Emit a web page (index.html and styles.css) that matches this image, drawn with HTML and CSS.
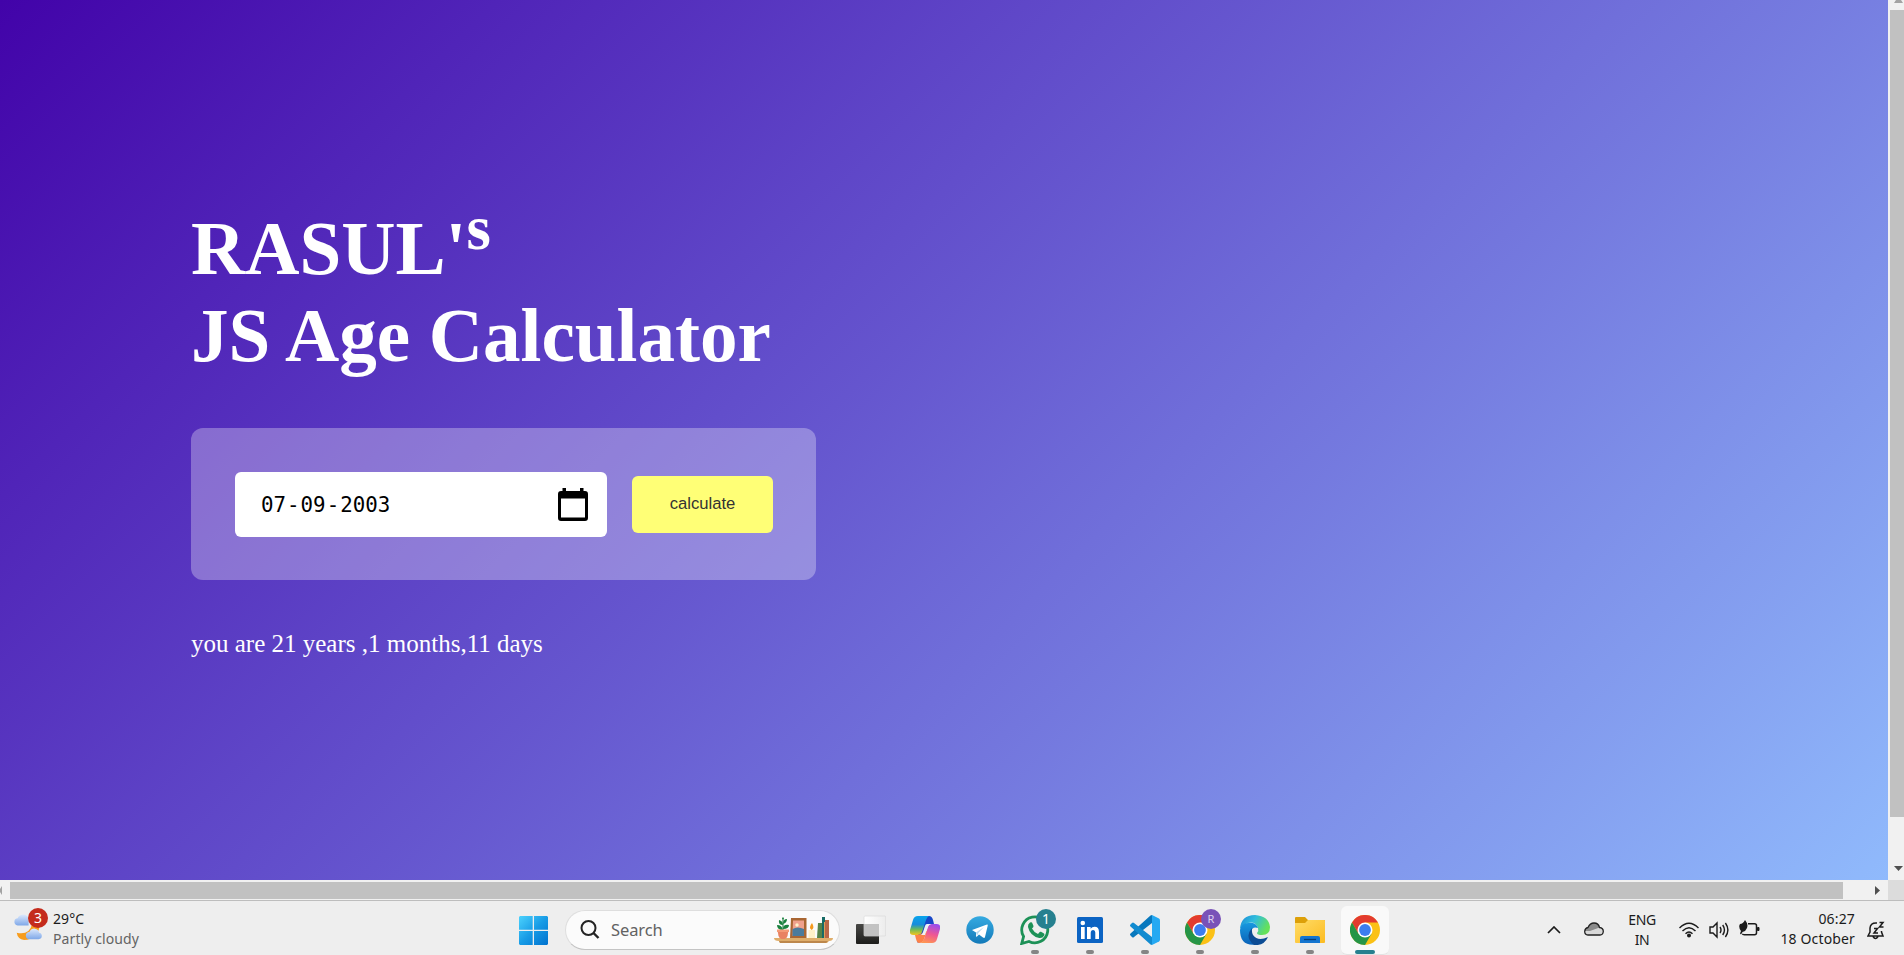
FILE: index.html
```html
<!DOCTYPE html>
<html lang="en">
<head>
<meta charset="utf-8">
<title>Age Calculator</title>
<link rel="stylesheet" href="styles.css">
</head>
<body>
<div class="screen">
  <div class="browser">
    <main class="page">
      <h1>RASUL'<sup>s</sup><br>JS Age Calculator</h1>
      <div class="card">
        <div class="date"><span class="date-text">07<i>-</i>09<i>-</i>2003</span>
          <svg class="cal" viewBox="0 0 30 33"><path fill="#000" fill-rule="evenodd" d="M4.500 0H8v3h14V0h3.500v3H27q3 0 3 3v24q0 3-3 3H3q-3 0-3-3V6q0-3 3-3h1.500zM3 10.500v19h24v-19z"/></svg>
        </div>
        <button class="calc">calculate</button>
      </div>
      <p class="result">you are 21 years ,1 months,11 days</p>
    </main>
    <div class="vbar"><svg class="up" viewBox="0 0 9 3"><path d="M2 0h5l2 3H0z" fill="#a3a3a3"/></svg><div class="vthumb"></div><svg class="down" viewBox="0 0 9 5"><path d="M0 0h9L4.500 5z" fill="#505050"/></svg></div>
    <div class="hbar"><svg class="left" viewBox="0 0 3 9"><path d="M2 0v9L0 6V3z" fill="#a3a3a3"/></svg><div class="hthumb"></div><svg class="right" viewBox="0 0 5 9"><path d="M0 0v9l5-4.500z" fill="#505050"/></svg></div>
    <div class="corner"></div>
  </div>

  <footer class="taskbar">
    <svg width="0" height="0" class="defs">
      <defs>
        <linearGradient id="cloud" x2="0" y2="1"><stop stop-color="#dce9fd"/><stop offset="1" stop-color="#7fa8e8"/></linearGradient>
        <linearGradient id="win" gradientUnits="userSpaceOnUse" x1="0" y1="0" x2="29" y2="29"><stop stop-color="#4cd2fd"/><stop offset=".5" stop-color="#189ce6"/><stop offset="1" stop-color="#0071ce"/></linearGradient>
        <g id="chrome">
          <circle cx="15" cy="15" r="15" fill="#fbc116"/>
          <path d="M15 7.500H28A15 15 0 0 0 2 7.500L8.500 18.700z" fill="#e33b2e"/>
          <path d="M2 7.500A15 15 0 0 0 15 30l6.500-11.300L15 15 8.500 18.700z" fill="#269547"/>
          <circle cx="15" cy="15" r="7.500" fill="#fff"/><circle cx="15" cy="15" r="5.900" fill="#3c7df0"/>
        </g>
      </defs>
    </svg>

    <div class="weather">
      <div class="weather-icon">
        <svg width="34" height="35" viewBox="0 0 34 35">
          <path d="M28 16c1 9-7 18-17 18Q4 33 3 26q14 3 17-10z" fill="#f79c1c"/>
          <path d="M4 18q-4-1-3.500-5Q1 10 4 10q2-4 6-4 4 0 6 4v8z" fill="url(#cloud)"/>
          <path d="M16 33q-3-.5-3-4t4-4q2-4 6-3.500 4 .5 4.500 4.500 3 .5 3 3.500T27 33z" fill="url(#cloud)"/>
        </svg>
        <span class="badge red">3</span>
      </div>
      <div class="weather-text"><span>29°C</span><span class="muted">Partly cloudy</span></div>
    </div>

    <div class="center">
      <svg class="start" viewBox="0 0 29 29"><path fill="url(#win)" d="M1 0h12.700v13.700H0V1zM15 0h13l1 1v12.700H15zM0 15h13.700v14H1l-1-1zM15 15h14v13l-1 1H15z"/></svg>

      <div class="search">
        <svg width="20" height="20" viewBox="0 0 20 20" fill="none" stroke="#242424" stroke-width="2"><circle cx="8.500" cy="8" r="7"/><path d="M13.500 13l5 5" stroke-width="2.400"/></svg>
        <span>Search</span>
        <svg class="shelf" width="59" height="27" viewBox="0 0 59 27">
          <path d="M0 21h59q0 3-4 3l-2 2H6l-1-2q-5 0-5-3z" fill="#dfae6b"/><path d="M5 24h49l-2 2H6z" fill="#bd884c"/>
          <path d="M9 14V3" stroke="#14753b"/>
          <path d="M9 13Q3 13 3 8q5 0 6 5zM9 12q0-5 6-4 0 4-6 4zM9 8Q4 8 5 3q4 1 4 5zM9 7q0-5 4-5 0 4-4 5zM9 3Q7 2 9 0q2 2 0 3z" fill="#19803d"/>
          <path d="M3.500 13h11l-1 6q-1 3-3 3h-3q-2 0-3-3z" fill="#e98262"/><path d="M3 12.500h12V15H3z" fill="#f49a76"/>
          <path d="M17 1h15.500v20H16z" fill="#a96632"/><path d="M19 3.500h11V19H18.500z" fill="#efa18d"/><path d="M18.500 12q5-3 11.500 0v7H18.500z" fill="#4b7b9b"/><circle cx="23" cy="8" r="1.700" fill="#fff1ca"/>
          <path d="M34.500 13h6.500v8h-6.500z" fill="#fff0c8"/><path d="M37.700 13Q34 11 38 6q3 5-.3 7z" fill="#f69a1e"/>
          <path d="M44 6h4v15h-5z" fill="#57834a"/><path d="M48 0h3v21h-3z" fill="#176b66"/><path d="M51 3h4v18h-4z" fill="#ba6848"/><path d="M50 5h1v16h-1z" fill="#d8a15a"/>
        </svg>
      </div>

      <div class="apps">
        <div class="app tasks"><svg viewBox="0 0 30 30">
          <linearGradient id="tv" x2="0" y2="1"><stop stop-color="#474745"/><stop offset="1" stop-color="#1d1d1b"/></linearGradient>
          <linearGradient id="tw" x2="1" y2="0"><stop stop-color="#fff"/><stop offset="1" stop-color="#ececec"/></linearGradient>
          <rect y="9" width="23" height="20" rx="1" fill="url(#tv)"/><rect x="8" y="1" width="21.700" height="20" rx="1" fill="url(#tw)" stroke="#dadada" stroke-width=".7"/><path d="M8 9h15v12H8z" fill="#c2c2c2"/></svg></div>
        <div class="app"><svg viewBox="0 0 30 30">
          <linearGradient id="cp1" x2="0" y2="1"><stop stop-color="#08a4ec"/><stop offset=".45" stop-color="#188cdb"/><stop offset=".7" stop-color="#6bb95b"/><stop offset="1" stop-color="#f3c51c"/></linearGradient>
          <linearGradient id="cp2" x1=".6" x2=".3" y2="1"><stop stop-color="#9c4eea"/><stop offset=".5" stop-color="#ef5694"/><stop offset="1" stop-color="#ff9651"/></linearGradient>
          <path d="M11 1h8q3 0 4 4l1 4h-5q-3 0-4 4l-3 10q-2 6-5 4l2-20z" fill="#1747c8"/>
          <path d="M8 1h11q-2 1-3 4l-4 12q-1 3-5 3H3q-4 0-3-5L3 5q1-4 5-4z" fill="url(#cp1)"/>
          <path d="M22 9h5q4 0 3 5l-3 10q-1 4-5 4H10q3-1 4-4l4-12q1-3 4-3z" fill="url(#cp2)"/>
          <path d="M5 20q4 0 6-1l3-2 3-1-3 8q-1 4-5 4-2 0-3-4z" fill="#fc8149"/>
          <path d="M17 9h4q-2.500.5-3.300 3L15 20h-4q1.500-1 2-3l2-6q.5-1.800 2-2z" fill="#eef0f5"/></svg></div>
        <div class="app"><svg viewBox="0 0 30 30"><linearGradient id="tg" x2="0" y2="1"><stop stop-color="#35aae1"/><stop offset="1" stop-color="#147ab9"/></linearGradient><circle cx="15" cy="15" r="13.700" fill="url(#tg)"/><path d="M7 15l15-5.500q1-.2.700 1.200L20 22q-.5 1.500-2 .5l-4-3-2 2q-1 .7-1-.5v-3.500z" fill="#fff"/><path d="M11 17.500l8-5.500-5.500 5.800-1.500 3z" fill="#b4d8ee"/></svg></div>
        <div class="app"><svg viewBox="0 0 30 30"><path d="M1.700 28.500l1.900-7A13 13 0 1 1 9 26.500z" fill="none" stroke="#1d9157" stroke-width="2.800"/><path d="M10 7.500q1-.7 2 0l1.500 3.500q.2 1-1.500 2.500 2 4 6 5.500l1.700-2q.5-.6 1.300-.2l3 1.600q.8.600.2 2-1.500 3-5 2.600Q10 21 8 12q-.4-3 2-4.500z" fill="#1d9157"/></svg><span class="badge teal">1</span><i class="dot"></i></div>
        <div class="app"><svg viewBox="0 0 30 30"><rect x="2" y="2" width="26" height="26" rx="1.500" fill="#0b63c3"/><circle cx="7.800" cy="8" r="2.300" fill="#fff"/><path d="M6 12h3.700v12H6zM12 12h3.600v1.700q1.300-2 4-2 4.400 0 4.400 5.300v7h-3.700v-6.500q0-2.600-2.100-2.600-2.500 0-2.500 3V24H12z" fill="#fff"/></svg><i class="dot"></i></div>
        <div class="app"><svg viewBox="0 0 30 30"><path d="M22 0l7 3.500q1 .5 1 2v19q0 1.500-1 2L22 30z" fill="#25a9f2"/><path d="M22 0v8L4 22q-1 1-2 0l-1.500-1.400q-1-1 0-2L20.500.6z" fill="#0878bd"/><path d="M22 30v-8L4 8Q3 7 2 8L.5 9.400q-1 1 0 2l20 18z" fill="#118bd0"/></svg><i class="dot"></i></div>
        <div class="app"><svg viewBox="0 0 30 30"><use href="#chrome"/></svg><span class="badge purple">R</span><i class="dot"></i></div>
        <div class="app"><svg viewBox="0 0 30 30">
          <linearGradient id="ed1" x2="1" y2=".4"><stop stop-color="#1989d8"/><stop offset=".5" stop-color="#31bddc"/><stop offset="1" stop-color="#65e15a"/></linearGradient>
          <linearGradient id="ed2" x2="0" y2="1"><stop stop-color="#1799df"/><stop offset="1" stop-color="#0a62b8"/></linearGradient>
          <path d="M0 14Q1 0 15 0q14 1 15 12 0 8-8 8-5 0-5-2 2-2 1-5Q15 6 8 8 2 10 0 14z" fill="url(#ed1)"/>
          <path d="M0 15Q1 8 8 8q8-1 10 5-6-2-7 4 0 7 8 12Q0 33 0 15z" fill="url(#ed2)"/>
          <path d="M12 13q-8 9 2 17 10 1 14-8-10 5-15-2-1.500-3-1-7z" fill="#0c4c94"/></svg><i class="dot"></i></div>
        <div class="app"><svg viewBox="0 0 30 30"><linearGradient id="fo" x2="1" y2="1"><stop stop-color="#ffdc67"/><stop offset="1" stop-color="#fcbb20"/></linearGradient><path d="M0 3q0-1 1-1h9l3 3h16q1 0 1 1v6H0z" fill="#dda009"/><path d="M0 8h10l3-3h16q1 0 1 1v21q0 1-1 1H1q-1 0-1-1z" fill="url(#fo)"/><path d="M5 28v-5q0-2 2-2h16q2 0 2 2v5z" fill="#1475d0"/><path d="M9 24.500h12" stroke="#063f78" stroke-width="1.300"/></svg><i class="dot"></i></div>
        <div class="app active"><svg viewBox="0 0 30 30"><use href="#chrome"/></svg><i class="dot"></i></div>
      </div>
    </div>

    <div class="tray">
      <svg class="chev" width="14" height="8" viewBox="0 0 14 8" fill="none" stroke="#1b1b1b" stroke-width="1.700"><path d="M1 7l6-6 6 6"/></svg>
      <svg class="onedrive" width="20" height="14" viewBox="0 0 20 14"><path d="M4 13q-3.300-.3-3.300-3.600Q1 6 4 5.500 6 1 10 1q4.500 0 5.500 4.500 3.800.5 3.800 4Q19 13 16 13z" fill="#d8d8d8"/><path d="M1 9q0-3 3-3.500Q6 1 10 1q4.500 0 5.500 4.500L6 9z" fill="#8b8b8b"/><path d="M4 13q-3.300-.3-3.300-3.600Q1 6 4 5.500 6 1 10 1q4.500 0 5.500 4.500 3.800.5 3.800 4Q19 13 16 13z" fill="none" stroke="#222" stroke-width="1.300"/></svg>
      <div class="lang"><span>ENG</span><span>IN</span></div>
      <svg class="wifi" width="20" height="16" viewBox="0 0 20 16" fill="none" stroke="#1b1b1b" stroke-width="1.400"><path d="M.5 6q9.500-9.500 19 0M3.500 9q6.500-6.500 13 0M6.500 11.800q3.500-3.500 7 0"/><circle cx="10" cy="13.500" r="1.300" fill="#1b1b1b"/></svg>
      <svg class="vol" width="20" height="18" viewBox="0 0 20 18" fill="none" stroke="#1b1b1b" stroke-width="1.400"><path d="M1 6h3l4-4v14l-4-4H1zM11 6q2 3 0 6M13.700 4q3.500 5 0 10M16.400 2q5 7 0 14"/></svg>
      <svg class="bat" width="21" height="17" viewBox="0 0 21 17"><path d="M9 3.700h6.500q2 0 2 2v7q0 2-2 2H5.500q-2 0-2-1" fill="none" stroke="#1b1b1b" stroke-width="1.500"/><path d="M18.500 7.500h1.500v3h-1.500z" fill="#1b1b1b" stroke="#1b1b1b"/><path d="M6 0q3.500 4 2 8-1 3-4.500 4l-1.500 2.500-1-1 1-2.500Q-1 7 1 4q3 0 5-4z" fill="#1b1b1b"/></svg>
      <div class="clock"><span>06:27</span><span>18 October</span></div>
      <svg class="bell" width="18" height="19" viewBox="0 0 18 19" fill="none" stroke="#1b1b1b" stroke-width="1.500"><path d="M10 2Q3.500 1.500 3 7v4l-2 4h15l-1.500-4V10M6 15.500q2.500 4 5 0"/><path d="M7 7.500h3.500L7 12h4M12.500 1.500H16L12.500 6h4"/></svg>
    </div>
  </footer>
</div>
</body>
</html>
```

FILE: styles.css
```css
* { box-sizing: border-box; }
body { margin: 0; overflow: hidden; font-family: "Noto Sans", sans-serif; }
svg { display: block; flex: none; }
.screen { width: 1904px; height: 955px; display: grid; grid-template-rows: 900px 55px; }

.browser { display: grid; grid-template: 880px 20px / 1888px 16px; background: #f1f1f1; }
.page { padding: 205px 0 0 191px; background: linear-gradient(135deg, #4203a9, #90bafc); color: #fff; font-family: "Liberation Serif", "Times New Roman", serif; overflow: hidden; }
h1 { margin: 0; font-size: 75.100px; line-height: 87px; font-weight: 700; white-space: nowrap; }
h1 sup { font-size: 62.5px; line-height: 0; vertical-align: 25px; }
.card { margin-top: 49px; width: 625px; height: 152px; padding: 0 43px 0 44px; border-radius: 12px; background: rgba(255, 255, 255, .3); display: flex; align-items: center; justify-content: space-between; }
.date { width: 372px; height: 65px; padding: 0 19px 0 26px; border-radius: 6px; background: #fff; color: #000; display: flex; align-items: center; justify-content: space-between; }
.date-text { font: 20.800px/30px "DejaVu Sans Mono", monospace; padding-top: 2px; }
.date-text i { font-style: normal; margin: 0 1px; }
.cal { width: 30px; height: 33px; }
.calc { width: 141px; height: 57px; padding: 0 0 1px; border: 0; border-radius: 6px; background: #ffff76; color: #333; font: 16.67px "Liberation Sans", Arial, sans-serif; }
.result { margin: 49px 0 0; font-size: 25px; line-height: 29px; }

.vbar { display: flex; flex-direction: column; align-items: flex-end; }
.vthumb { width: 14px; height: 807px; margin-top: 7px; background: #c1c1c1; }
.up { width: 9px; height: 3px; margin-right: 1px; }
.down { width: 9px; height: 5px; margin: 49px 1px 0 0; }
.hbar { display: flex; align-items: center; }
.hthumb { width: 1833px; height: 17px; margin-left: 7px; background: #c1c1c1; }
.left { width: 3px; height: 9px; }
.right { width: 5px; height: 9px; margin-left: 32px; }
.corner { background: #dcdcdc; }

.taskbar { display: flex; background: #eee; border-top: 1px solid #bdbdbd; color: #1b1b1b; font-size: 14px; line-height: 20px; }
.defs { width: 0; height: 0; }
.weather { width: 519px; padding: 8px 0 0 14px; display: flex; }
.weather-icon { position: relative; width: 39px; }
.weather-icon svg { width: 31px; height: 32px; }
.weather-text { display: flex; flex-direction: column; letter-spacing: .1px; }
.muted { color: #646464; }
.badge { position: absolute; display: grid; place-items: center; width: 20px; height: 20px; border-radius: 50%; color: #fff; font-size: 14px; line-height: 20px; }
.red { left: 14px; top: -1px; background: #c42b1c; }
.teal { left: 31px; top: 8px; background: #26808f; }
.purple { left: 31px; top: 8px; background: #7952b8; font-size: 11px; color: #ddd0ef; }

.center { display: flex; width: 1016px; }
.start { width: 29px; height: 29px; margin: 15px 17px 0 0; }
.search { width: 275px; height: 40px; margin-top: 9px; padding: 0 6px 0 14px; border: 1px solid #dedede; border-bottom-color: #c4c4c4; border-radius: 20px; background: #fbfbfb; display: flex; align-items: center; color: #626262; font-size: 16.5px; letter-spacing: -.1px; }
.search span { margin-left: 11px; }
.shelf { margin-left: auto; }
.apps { display: flex; }
.app { position: relative; width: 55px; height: 54px; padding: 14px 0 0 15px; flex: none; }
.app svg { width: 30px; height: 30px; }
.app.tasks { padding-left: 16px; }
.app.active::before { content: ""; position: absolute; left: 6px; top: 5px; width: 48px; height: 48px; border-radius: 6px; background: #f9f9f9; border-bottom: 1px solid #e3e3e3; }
.app.active svg { position: relative; }
.dot { position: absolute; left: 26px; bottom: 1px; width: 8px; height: 4px; border-radius: 2px; background: #858585; }
.active .dot { left: 20px; width: 20px; background: #26808f; }

.tray { display: flex; align-items: flex-start; padding-left: 12px; }
.chev { margin-top: 25px; }
.onedrive { margin: 21px 0 0 23px; }
.lang { width: 40px; margin: 9px 0 0 18px; display: flex; flex-direction: column; align-items: center; letter-spacing: -.4px; }
.wifi { margin: 21px 0 0 17px; }
.vol { margin: 20px 0 0 10px; }
.bat { margin: 19px 0 0 10px; }
.clock { width: 90px; margin: 8px 0 0 5px; display: flex; flex-direction: column; align-items: flex-end; white-space: nowrap; letter-spacing: .15px; }
.bell { margin: 20px 0 0 12px; }
```
